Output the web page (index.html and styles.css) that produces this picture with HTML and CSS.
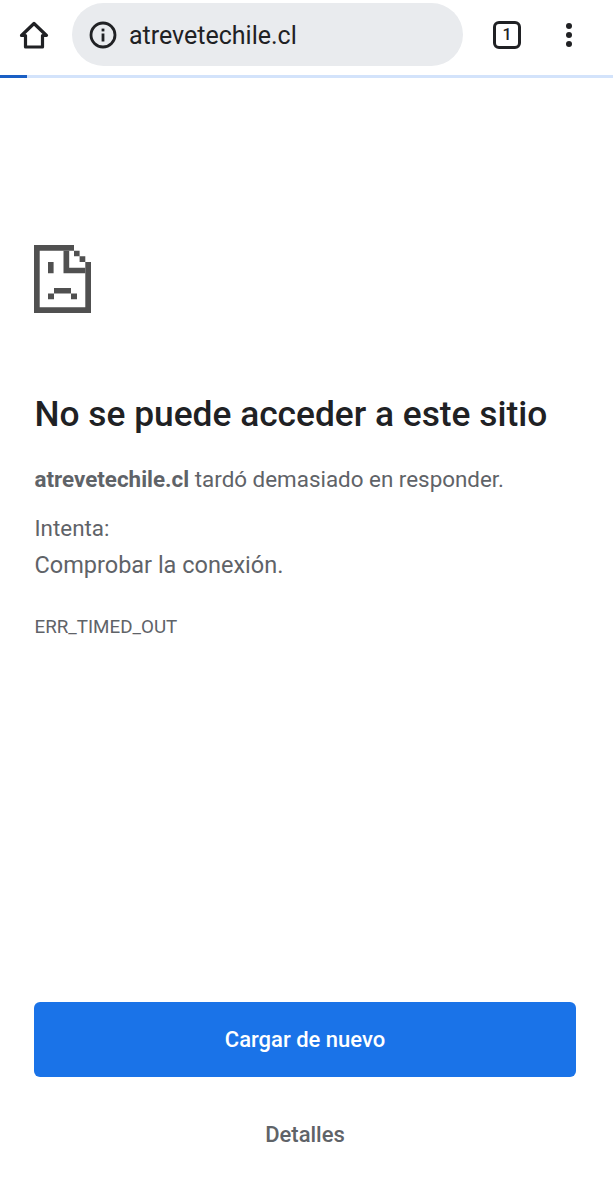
FILE: index.html
```html
<!DOCTYPE html>
<html lang="es">
<head>
    <meta charset="UTF-8">
    <meta name="viewport" content="width=device-width, initial-scale=1.0">
    <title>No se puede acceder a este sitio</title>
    <link rel="stylesheet" href="styles.css">
</head>
<body>
    <header class="toolbar">
        <svg class="home-icon" viewBox="0 0 30 30" width="30" height="30">
            <path d="M15 3.5 L27.5 15.5 H23.5 V27 H6.5 V15.5 H2.5 Z" fill="none" stroke="#202124" stroke-width="3.2" stroke-linejoin="round"/>
        </svg>
        <div class="omnibox">
            <svg class="info-icon" viewBox="0 0 28 28" width="28" height="28">
                <circle cx="14" cy="14" r="12" fill="none" stroke="#202124" stroke-width="2.8"/>
                <rect x="12.6" y="12.5" width="2.8" height="8" fill="#202124"/>
                <rect x="12.6" y="7.6" width="2.8" height="2.8" fill="#202124"/>
            </svg>
            <span class="url">atrevetechile.cl</span>
        </div>
        <div class="tab-count">1</div>
        <div class="menu-dots"><span></span><span></span><span></span></div>
    </header>
    <div class="progress"><div class="progress-fill"></div></div>

    <main class="content">
        <!-- sad page icon, drawn on its pixel grid -->
        <svg class="sad-icon" viewBox="0 0 57 68" width="57" height="68">
            <path fill="#505050" d="M0 0H40V5.7H5.7V62.3H51.3V17H57V68H0Z"/>
            <path fill="#505050" d="M29.5 5.7H35.2V22.7H51.3V28.3H29.5Z"/>
            <path fill="#505050" d="M40 5.7H45.6V11.3H40ZM45.6 11.3H51.3V17H45.6Z"/>
            <path fill="#505050" d="M14 17H19.6V28.3H14ZM20 43H37V48.6H20ZM14 48.6H20V54.3H14ZM37 48.6H43V54.3H37Z"/>
        </svg>
        <h1>No se puede acceder a este sitio</h1>
        <p class="summary"><strong>atrevetechile.cl</strong> tardó demasiado en responder.</p>
        <p class="try-label">Intenta:</p>
        <p class="try-item">Comprobar la conexión.</p>
        <p class="error-code">ERR_TIMED_OUT</p>

        <div class="actions">
            <button class="reload-btn">Cargar de nuevo</button>
            <button class="details-btn">Detalles</button>
        </div>
    </main>
</body>
</html>
```

FILE: styles.css
```css
html, body {
    margin: 0;
    padding: 0;
}

body {
    width: 613px;
    height: 1200px;
    overflow: hidden;
    background: #fff;
    font-family: Roboto, "Liberation Sans", sans-serif;
    color: #5f6368;
    display: flex;
    flex-direction: column;
}

/* Browser toolbar */
.toolbar {
    height: 75px;
    display: flex;
    align-items: center;
    flex-shrink: 0;
}

.home-icon {
    margin-left: 19px;
    margin-top: -5px;
}

.omnibox {
    width: 391px;
    height: 63px;
    margin-left: 23px;
    margin-top: -6px;
    background: #e9ebee;
    border-radius: 32px;
    display: flex;
    align-items: center;
}

.info-icon {
    margin-left: 17px;
}

.url {
    margin-left: 12px;
    margin-top: 2px;
    font-size: 25px;
    color: #202124;
}

.tab-count {
    width: 22px;
    height: 22px;
    margin-left: 30px;
    margin-top: -6px;
    border: 3px solid #202124;
    border-radius: 6px;
    display: flex;
    align-items: center;
    justify-content: center;
    font-size: 16px;
    font-weight: 500;
    color: #202124;
}

.menu-dots {
    margin-left: 45px;
    margin-top: -6px;
    display: flex;
    flex-direction: column;
    gap: 3px;
}

.menu-dots span {
    width: 6px;
    height: 6px;
    border-radius: 50%;
    background: #202124;
}

.progress {
    height: 3px;
    background: #d3e3fb;
    flex-shrink: 0;
}

.progress-fill {
    width: 27px;
    height: 100%;
    background: #1a5fc4;
}

/* Error page */
.content {
    flex: 1;
    padding: 167px 37px 0 34.5px;
    display: flex;
    flex-direction: column;
}

.sad-icon {
    display: block;
    margin-left: -0.5px;
}

h1 {
    margin: 81px 0 0;
    font-size: 35.3px;
    line-height: 40px;
    font-weight: 500;
    color: #202124;
}

p {
    margin: 0;
    font-size: 22.4px;
}

.summary {
    margin-top: 30px;
    line-height: 30px;
}

.summary strong {
    font-weight: 700;
}

.try-label {
    margin-top: 19px;
    line-height: 30px;
}

.try-item {
    margin-top: 7px;
    font-size: 23.5px;
    line-height: 30px;
}

.error-code {
    margin-top: 32px;
    font-size: 18.8px;
    line-height: 30px;
}

.actions {
    margin-top: auto;
    margin-bottom: 46px;
    margin-left: -0.5px;
    display: flex;
    flex-direction: column;
    align-items: center;
}

button {
    font-family: inherit;
    border: none;
    font-weight: 500;
    font-size: 22px;
    padding: 0;
}

.reload-btn {
    width: 542px;
    height: 75px;
    background: #1a73e8;
    color: #fff;
    border-radius: 6px;
}

.details-btn {
    width: 120px;
    height: 40px;
    margin-top: 37px;
    background: none;
    color: #5f6368;
}
```
